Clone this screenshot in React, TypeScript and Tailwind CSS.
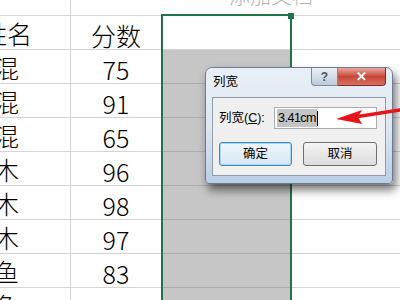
import React from "react";

const rows = [
  { name: "张小混", score: 75 },
  { name: "李小混", score: 91 },
  { name: "王小混", score: 65 },
  { name: "赵小木", score: 96 },
  { name: "钱小木", score: 98 },
  { name: "孙小木", score: 97 },
  { name: "周小鱼", score: 83 },
  { name: "吴小鱼", score: 87 },
];

const cjk = "font-['Liberation_Sans','Noto_Sans_CJK_SC',sans-serif]";

function SheetRow({
  a,
  b,
  selected,
  aPad,
}: {
  a: string;
  b: string | number;
  selected: boolean;
  aPad: string;
}) {
  return (
    <div className="flex h-[34px] shrink-0">
      <div
        className={`flex w-[71px] shrink-0 items-center justify-end overflow-hidden whitespace-nowrap border-b border-r border-[#d4d4d4] pt-[6px] text-[25px] font-light leading-none text-black ${aPad}`}
      >
        {a}
      </div>
      <div className="flex w-[90px] shrink-0 items-center justify-center border-b border-[#d4d4d4] pt-[6px] font-['Noto_Sans_CJK_SC',sans-serif] text-[25px] font-light leading-none text-black">
        {b}
      </div>
      <div
        className={`w-[129px] shrink-0 border-b ${
          selected ? "border-[#ababab] bg-[#c6c6c6]" : "border-[#d4d4d4] bg-white"
        }`}
      />
      <div className="flex-1 border-b border-[#d4d4d4]" />
    </div>
  );
}

export default function App() {
  return (
    <div className={`relative h-[300px] w-[400px] overflow-hidden bg-white ${cjk}`}>
      {/* sheet */}
      <div className="flex flex-col">
        <div className="flex h-[16px] shrink-0 border-b border-[#d4d4d4]">
          <div className="w-[71px] shrink-0 border-r border-[#d4d4d4]" />
        </div>
        <SheetRow a="姓名" b="分数" selected={false} aPad="pr-[38px]" />
        {rows.map((r) => (
          <SheetRow key={r.name} a={r.name} b={r.score} selected aPad="pr-[51px]" />
        ))}
      </div>

      {/* faint text cut off at top */}
      <div className="absolute left-[229px] top-[-15px] text-[21px] font-light leading-none text-[#b4b4b4]">
        添加文档
      </div>

      {/* column selection */}
      <div className="absolute left-[161px] top-[14px] h-[300px] w-[131px] border-l-2 border-r-2 border-t-2 border-[#217346]" />
      <div className="absolute left-[288px] top-[13px] h-[6px] w-[6px] bg-[#217346]" />

      {/* dialog */}
      <div className="absolute left-[205px] top-[67px] h-[117px] w-[188px] rounded-b-[4px] rounded-t-[7px] border border-[#6d7d8e] bg-gradient-to-b from-[#e9eff6] via-[#dfe8f2] to-[#b9cfe6] shadow-[3px_6px_10px_rgba(0,0,0,0.55)]">
        <div className="flex h-[29px] items-center pl-[7px] text-[12.5px] text-black">列宽</div>

        <div className="absolute right-[6px] top-0 flex">
          <div className="flex h-[18px] w-[27px] items-center justify-center rounded-bl-[4px] border border-t-0 border-[#7d8b9b] bg-gradient-to-b from-[#eef2f7] to-[#bccada] text-[12px] font-bold text-[#4a5460]">
            ?
          </div>
          <div className="flex h-[18px] w-[48px] items-center justify-center rounded-br-[4px] border border-l-0 border-t-0 border-[#7a2f26] bg-gradient-to-b from-[#e9a99f] via-[#c7463a] to-[#d8705f] text-[13px] font-bold text-white">
            ✕
          </div>
        </div>

        <div className="mx-[6px] flex h-[79px] flex-col border border-[#8f9cab] bg-[#f0f0f0] px-[6px] pt-[9px] text-[12.5px] text-black">
          <div className="flex h-[22px] items-center">
            <span className="w-[55px]">
              列宽(<span className="underline">C</span>):
            </span>
            <div className="flex h-[22px] w-[103px] items-center border border-[#abadb3] bg-white pl-[2px]">
              <span className="bg-[#c4c4c4] px-[1px] text-[12.5px] tracking-[-0.5px]">3.41cm</span>
              <span className="h-[15px] w-px bg-black" />
            </div>
          </div>
          <div className="mt-[13px] flex gap-[11px]">
            <div className="flex h-[24px] w-[73px] items-center justify-center rounded-[3px] border border-[#3c8ac6] bg-gradient-to-b from-[#eef6fb] to-[#d6e8f4] shadow-[inset_0_0_0_1px_#a6d6f2]">
              确定
            </div>
            <div className="flex h-[24px] w-[74px] items-center justify-center rounded-[3px] border border-[#707070] bg-gradient-to-b from-[#f4f4f4] to-[#dcdcdc]">
              取消
            </div>
          </div>
        </div>
      </div>

      {/* red arrow */}
      <svg className="absolute left-[330px] top-[100px]" width="70" height="30" viewBox="0 0 70 30">
        <path d="M70 10 L28 16.5" stroke="#e5161b" strokeWidth="3.5" strokeLinecap="round" />
        <path d="M6 19 L32 10 L28 17 L32 24 Z" fill="#e5161b" />
      </svg>
    </div>
  );
}
